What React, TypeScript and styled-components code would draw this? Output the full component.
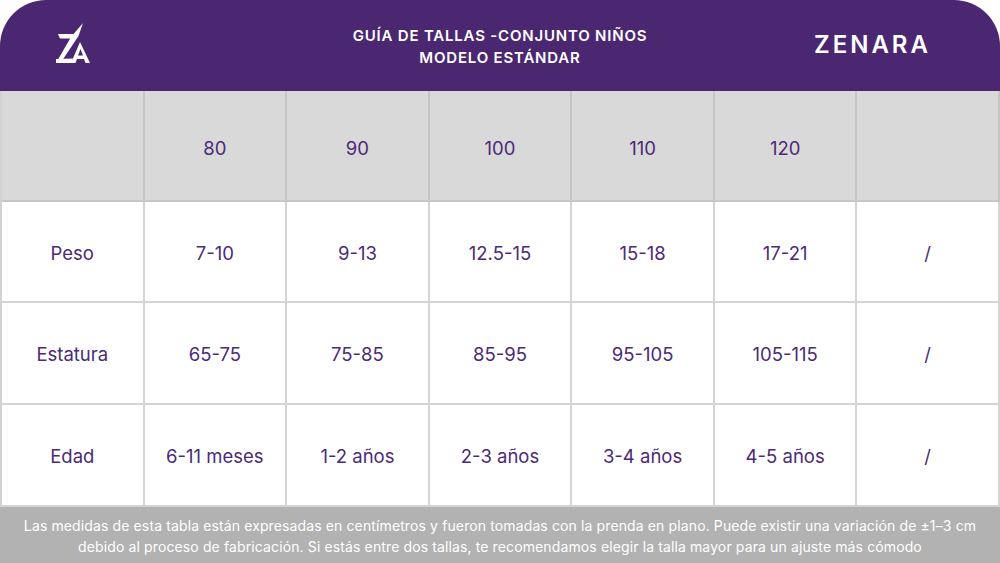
import React from "react";
import styled, { createGlobalStyle } from "styled-components";

const GlobalStyle = createGlobalStyle`
  html, body {
    margin: 0;
    padding: 0;
    background: #ffffff;
  }
  body {
    font-family: Inter, "Noto Sans", sans-serif;
  }
`;

const sizes = ["80", "90", "100", "110", "120", ""];

const rows = [
  { label: "Peso", values: ["7-10", "9-13", "12.5-15", "15-18", "17-21", "/"] },
  { label: "Estatura", values: ["65-75", "75-85", "85-95", "95-105", "105-115", "/"] },
  { label: "Edad", values: ["6-11 meses", "1-2 años", "2-3 años", "3-4 años", "4-5 años", "/"] },
];

const Logo = () => (
  <svg width="42" height="46" viewBox="0 0 42 46" fill="#ffffff">
    {/* Z: top bar, long tapered slash, bottom bar */}
    <polygon points="8,14 24,14 21,18.5 10,18.5" />
    <polygon points="33,3 28.5,16 10.5,43 6,43 21,17" />
    <polygon points="6,39 23,38.5 21.5,43 6,43" />
    {/* A */}
    <path
      fillRule="evenodd"
      d="M21 43 L30 22 L40 43 L35.5 43 L34 39 L27 39 L25.5 43 Z M28 35.5 L30.5 29 L33 35.5 Z"
    />
  </svg>
);

export default function App() {
  return (
    <Page>
      <GlobalStyle />
      <Header>
        <LogoBox>
          <Logo />
        </LogoBox>
        <Title>
          <span>GUÍA DE TALLAS -CONJUNTO NIÑOS</span>
          <span>MODELO ESTÁNDAR</span>
        </Title>
        <Brand>ZENARA</Brand>
      </Header>
      <Table>
        <Cell $head />
        {sizes.map((s, i) => (
          <Cell key={"h" + i} $head>
            {s}
          </Cell>
        ))}
        {rows.map((r) => (
          <React.Fragment key={r.label}>
            <Cell>{r.label}</Cell>
            {r.values.map((v, i) => (
              <Cell key={r.label + i}>{v}</Cell>
            ))}
          </React.Fragment>
        ))}
      </Table>
      <Footer>
        Las medidas de esta tabla están expresadas en centímetros y fueron tomadas con la prenda en plano. Puede existir una variación de ±1–3 cm
        <br />
        debido al proceso de fabricación. Si estás entre dos tallas, te recomendamos elegir la talla mayor para un ajuste más cómodo
      </Footer>
    </Page>
  );
}

const Page = styled.div`
  width: 1000px;
  height: 563px;
  display: flex;
  flex-direction: column;
  overflow: hidden;
`;

const Header = styled.div`
  height: 91px;
  background: #4a2770;
  border-radius: 46px 46px 0 0;
  display: grid;
  grid-template-columns: 1fr auto 1fr;
  align-items: center;
  color: #ffffff;
`;

const LogoBox = styled.div`
  display: flex;
  align-items: center;
  padding-left: 50px;
  padding-bottom: 5px;
`;

const Title = styled.div`
  display: flex;
  flex-direction: column;
  align-items: center;
  font-size: 15px;
  font-weight: 600;
  letter-spacing: 0.8px;
  line-height: 22px;
  padding-top: 2px;
`;

const Brand = styled.div`
  justify-self: end;
  padding-right: 69px;
  font-size: 24px;
  font-weight: 600;
  letter-spacing: 3px;
  padding-bottom: 2px;
`;

const Table = styled.div`
  display: grid;
  grid-template-columns: repeat(7, 1fr);
  grid-template-rows: 111px 101px 102px 102px;
  border-left: 2px solid #d2d2d2;
`;

const Cell = styled.div<{ $head?: boolean }>`
  display: flex;
  align-items: center;
  justify-content: center;
  padding-top: ${({ $head }) => ($head ? "5px" : "2px")};
  background: ${({ $head }) => ($head ? "#d9d9d9" : "#ffffff")};
  border-right: 2px solid ${({ $head }) => ($head ? "#c6c6c6" : "#d4d4d4")};
  border-bottom: 2px solid ${({ $head }) => ($head ? "#c6c6c6" : "#d4d4d4")};
  color: #4b2a78;
  font-size: 18.5px;
  font-weight: 400;
`;

const Footer = styled.div`
  flex: 1;
  background: #b2b2b2;
  color: #ffffff;
  font-size: 14px;
  letter-spacing: 0.12px;
  line-height: 21px;
  text-align: center;
  padding-top: 8px;
`;
